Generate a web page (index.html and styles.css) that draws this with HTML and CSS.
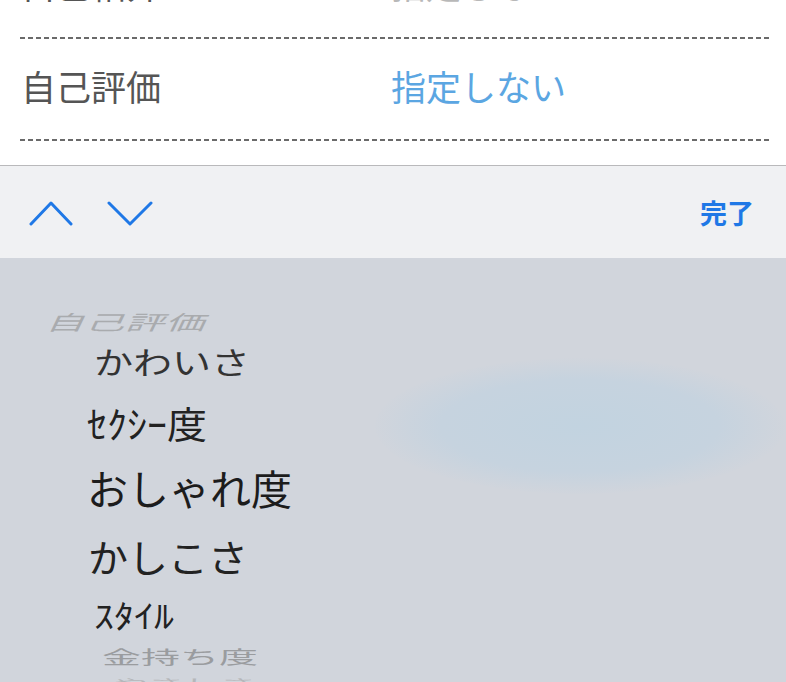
FILE: index.html
```html
<!DOCTYPE html>
<html lang="ja">
<head>
<meta charset="utf-8">
<title>自己評価</title>
<link rel="stylesheet" href="styles.css">
</head>
<body>
<div class="form">
  <div class="row">
    <span class="label">自己紹介</span>
    <span class="value muted">指定しない</span>
  </div>
  <div class="dash"></div>
  <div class="row">
    <span class="label">自己評価</span>
    <span class="value">指定しない</span>
  </div>
  <div class="dash"></div>
</div>
<div class="toolbar">
  <div class="arrows">
    <svg class="chev" width="46" height="27" viewBox="0 0 46 27"><polyline points="2,24 22,3 42,24" fill="none" stroke="#1f78e6" stroke-width="3" stroke-linecap="round" stroke-linejoin="round"/></svg>
    <svg class="chev" width="46" height="27" viewBox="0 0 46 27"><polyline points="2,3 23,24 44,3" fill="none" stroke="#1f78e6" stroke-width="3" stroke-linecap="round" stroke-linejoin="round"/></svg>
  </div>
  <span class="done">完了</span>
</div>
<div class="picker">
  <div class="glow"></div>
  <div class="item i0">自己評価</div>
  <div class="item i1">かわいさ</div>
  <div class="item i2">ｾｸｼｰ度</div>
  <div class="item i3">おしゃれ度</div>
  <div class="item i4">かしこさ</div>
  <div class="item i5">ｽﾀｲﾙ</div>
  <div class="item i6">金持ち度</div>
  <div class="item i7">やさしさ</div>
</div>
</body>
</html>
```
FILE: styles.css
```css
html, body {
  margin: 0;
  padding: 0;
  width: 786px;
  height: 682px;
  overflow: hidden;
  background: #ffffff;
  font-family: "Noto Sans CJK JP", "Noto Sans", sans-serif;
}

.form {
  margin-top: -63px;
  padding-bottom: 24px;
  background: #ffffff;
  border-bottom: 1px solid #b9b9bb;
}

.row {
  height: 100px;
  box-sizing: border-box;
  display: flex;
  align-items: center;
  padding: 0 0 7px 21px;
  font-size: 35px;
  line-height: 1;
}

.label {
  width: 370px;
  color: #555555;
}

.value {
  color: #5ba6e2;
}

.value.muted {
  color: #b8b8b8;
}

.dash {
  height: 2px;
  margin: 0 16px 0 20px;
  background: repeating-linear-gradient(to right, #6a6a6a 0 5px, transparent 5px 8px);
}

.toolbar {
  height: 92px;
  background: #f0f1f3;
  display: flex;
  align-items: center;
  justify-content: space-between;
  padding: 0 32px 0 29px;
}

.arrows {
  display: flex;
  gap: 32px;
  margin-top: 2px;
}

.chev {
  display: block;
}

.done {
  color: #1f78e6;
  font-size: 27px;
  font-weight: 700;
  line-height: 1;
  margin-top: 1px;
}

.picker {
  position: relative;
  height: 424px;
  background: #d1d5dc;
  padding-top: 45px;
  box-sizing: border-box;
  overflow: hidden;
}

.glow {
  position: absolute;
  left: 375px;
  top: 100px;
  width: 410px;
  height: 136px;
  border-radius: 50%;
  background: radial-gradient(ellipse at center, #c2d3e0 0%, #c6d3df 48%, rgba(209, 213, 220, 0) 72%);
}

.item {
  position: relative;
  font-size: 40px;
  white-space: nowrap;
  color: #222222;
  transform-origin: left center;
}

.i0 {
  height: 36px;
  line-height: 36px;
  padding-left: 45px;
  color: #a9abae;
  font-style: italic;
  font-size: 39px;
  letter-spacing: 1px;
  transform: scaleY(0.52);
}

.i1 {
  height: 44px;
  line-height: 44px;
  padding-left: 94px;
  color: #333333;
  font-size: 39px;
  transform: scaleY(0.78);
}

.i2 {
  height: 72px;
  line-height: 72px;
  padding-left: 87px;
  transform: translateY(4px) scaleY(0.93);
}

.i3 {
  height: 68px;
  line-height: 68px;
  padding-left: 87px;
  color: #1c1c1c;
  font-size: 41px;
  transform: translateY(-2px);
}

.i4 {
  height: 66px;
  line-height: 66px;
  padding-left: 88px;
  transform: scaleY(0.94);
}

.i5 {
  height: 50px;
  line-height: 50px;
  padding-left: 94px;
  transform: scaleY(0.8);
}

.i6 {
  height: 34px;
  line-height: 34px;
  padding-left: 102px;
  color: #9a9c9f;
  font-size: 39px;
  transform: scaleY(0.46);
}

.i7 {
  height: 18px;
  line-height: 18px;
  padding-left: 112px;
  color: #b5b7ba;
  font-size: 36px;
  transform: scaleY(0.25);
}
```
